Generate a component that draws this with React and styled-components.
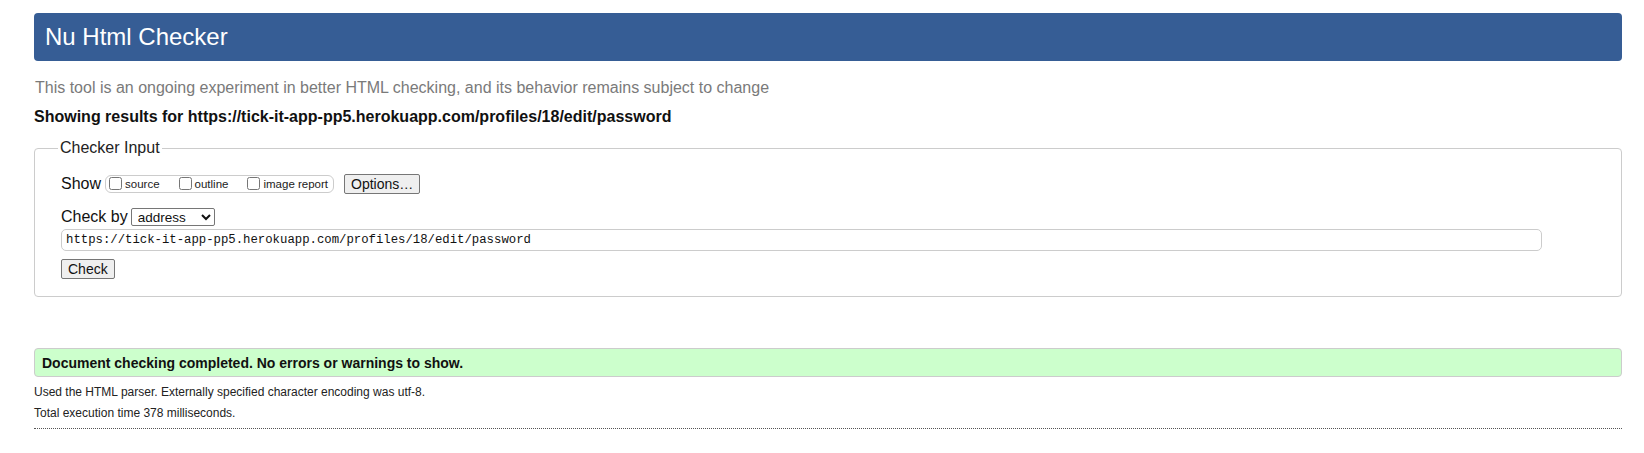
import styled, { createGlobalStyle } from "styled-components";

const Global = createGlobalStyle`
  html, body {
    margin: 0;
    padding: 0;
    background: #fff;
    font-family: "Liberation Sans", Arial, sans-serif;
    color: #111;
  }
`;

const Page = styled.div`
  padding: 13px 22px 20px 34px;
`;

const Header = styled.h1`
  margin: 0;
  height: 48px;
  box-sizing: border-box;
  padding: 0 11px;
  display: flex;
  align-items: center;
  background: #365d95;
  border-radius: 4px;
  color: #fff;
  font-weight: normal;
  font-size: 24px;
`;

const Intro = styled.p`
  margin: 18px 0 0 1px;
  color: #7a7a7a;
  font-size: 16px;
  line-height: 18px;
`;

const Showing = styled.p`
  margin: 11px 0 0 0;
  font-size: 16px;
  font-weight: bold;
  line-height: 18px;
`;

const Fieldset = styled.fieldset`
  margin: 13px 0 0 0;
  padding: 7px 24px 17px 26px;
  border: 1px solid #ccc;
  border-radius: 4px;
`;

const Legend = styled.legend`
  padding: 0 2px;
  margin-left: -3px;
  font-size: 16px;
  color: #222;
`;

const Row = styled.div`
  display: flex;
  align-items: center;
  margin-top: ${(p) => p.$mt || 0}px;
  font-size: 16px;
`;

const CheckGroup = styled.span`
  display: inline-flex;
  align-items: center;
  height: 18px;
  box-sizing: border-box;
  margin-left: 4px;
  padding: 0 5px 0 3px;
  border: 1px solid #ccc;
  border-radius: 6px;
  gap: 19px;
`;

const CheckLabel = styled.label`
  display: inline-flex;
  align-items: center;
  font-size: 11.5px;
  color: #222;

  input {
    margin: -2px 3px 0 0;
    width: 13px;
    height: 13px;
  }
`;

const Button = styled.button`
  font-family: "Liberation Sans", Arial, sans-serif;
  font-size: 14px;
  height: 20px;
  padding: 0 6px;
  background: #efefef;
  border: 1px solid #767676;
  border-radius: 2px;
  color: #111;
  margin-left: ${(p) => p.$ml || 0}px;
`;

const Select = styled.select`
  margin-left: 3px;
  width: 84px;
  height: 18px;
  font-family: "Liberation Sans", Arial, sans-serif;
  font-size: 13.5px;
  border: 1px solid #767676;
  border-radius: 2px;
  background: #fff;
  color: #111;
  padding: 0 2px;
`;

const UrlInput = styled.input`
  display: block;
  box-sizing: border-box;
  width: 1481px;
  height: 22px;
  margin-top: 3px;
  padding: 0 4px;
  border: 1px solid #ccc;
  border-radius: 5px;
  font-family: "Liberation Mono", "DejaVu Sans Mono", monospace;
  font-size: 12.3px;
  color: #111;
  outline: none;
`;

const Success = styled.div`
  margin-top: 51px;
  height: 29px;
  box-sizing: border-box;
  display: flex;
  align-items: center;
  padding: 0 7px;
  background: #ccffcc;
  border: 1px solid #ccc;
  border-radius: 4px;
  font-size: 14px;
  font-weight: bold;
`;

const Note = styled.p`
  margin: ${(p) => p.$mt || 0}px 0 0 0;
  font-size: 12px;
  line-height: 14px;
  color: #222;
`;

const Rule = styled.hr`
  margin: 8px 0 0 0;
  border: 0;
  border-top: 1px dotted #555;
`;

export default function App() {
  const url = "https://tick-it-app-pp5.herokuapp.com/profiles/18/edit/password";
  return (
    <>
      <Global />
      <Page>
        <Header>Nu Html Checker</Header>
        <Intro>
          This tool is an ongoing experiment in better HTML checking, and its
          behavior remains subject to change
        </Intro>
        <Showing>Showing results for {url}</Showing>
        <Fieldset>
          <Legend>Checker Input</Legend>
          <Row $mt={10}>
            Show
            <CheckGroup>
              <CheckLabel>
                <input type="checkbox" />
                source
              </CheckLabel>
              <CheckLabel>
                <input type="checkbox" />
                outline
              </CheckLabel>
              <CheckLabel>
                <input type="checkbox" />
                image report
              </CheckLabel>
            </CheckGroup>
            <Button $ml={10}>Options…</Button>
          </Row>
          <Row $mt={14}>
            Check by
            <Select defaultValue="address">
              <option value="address">address</option>
              <option value="file">file upload</option>
              <option value="text">text input</option>
            </Select>
          </Row>
          <UrlInput defaultValue={url} />
          <Row $mt={8}>
            <Button>Check</Button>
          </Row>
        </Fieldset>
        <Success>Document checking completed. No errors or warnings to show.</Success>
        <Note $mt={8}>
          Used the HTML parser. Externally specified character encoding was
          utf-8.
        </Note>
        <Note $mt={7}>Total execution time 378 milliseconds.</Note>
        <Rule />
      </Page>
    </>
  );
}
